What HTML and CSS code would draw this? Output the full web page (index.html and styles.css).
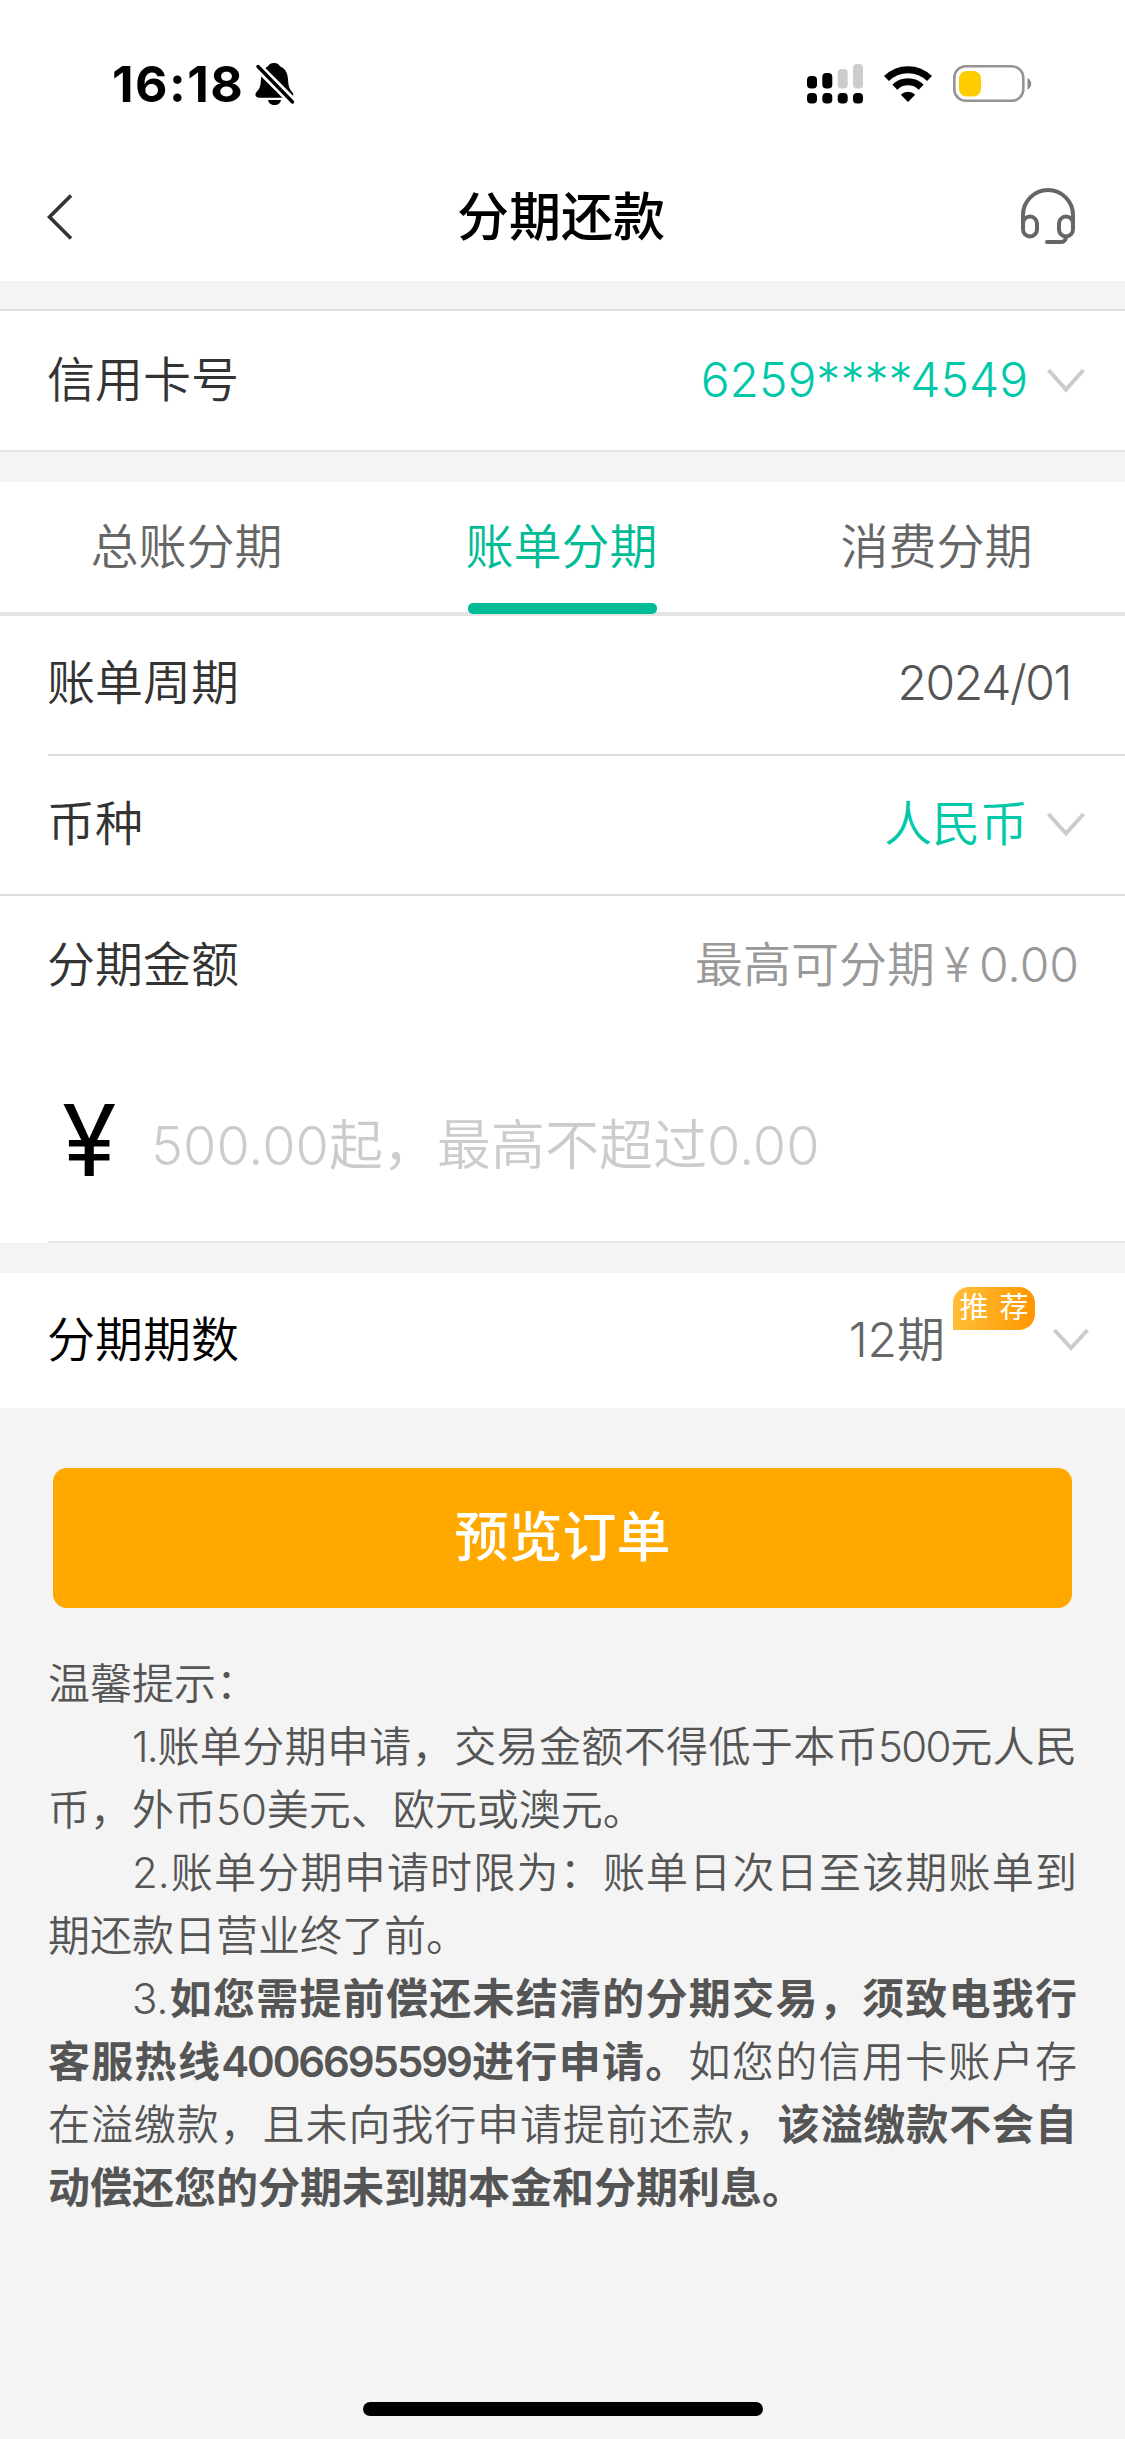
FILE: index.html
```html
<!DOCTYPE html>
<html lang="zh-CN">
<head>
<meta charset="utf-8">
<title>分期还款</title>
<link rel="stylesheet" href="styles.css">
</head>
<body>
<div class="status">
  <span class="time">16:18</span>
  <svg class="bell" width="42" height="44" viewBox="0 0 42 44">
    <path d="M20 1c3.500 0 5.300 1.800 6 3.300 5 2.200 7.600 6.500 8 12.700.4 7 1 9.500 4.500 13.500 1.500 1.800 1 5.300-2 5.300H5c-3.500 0-4.500-3.500-2.500-5.700C6 26.500 6.500 24 7 17 7.400 10.800 9.500 6.500 14 4.300 14.800 2.600 16.500 1 20 1z"/>
    <path d="M14 38h13c-.5 3-3 5-6.500 5S14.500 41 14 38z"/>
    <path d="M2 3 40 41" stroke="#fff" stroke-width="9"/>
    <path d="M4 4.500 38.500 40" stroke="#000" stroke-width="3.400" stroke-linecap="round"/>
  </svg>
  <svg class="signal" width="56" height="40" viewBox="0 0 56 40">
    <rect x="0" y="12" width="10" height="12.500" rx="4"/><rect x="15.300" y="9" width="10" height="15.500" rx="4"/>
    <rect x="30.700" y="5" width="10" height="19.500" rx="4" fill="#ccc"/><rect x="46" y="0" width="10" height="24.500" rx="4" fill="#ccc"/>
    <rect x="0" y="29" width="10" height="10.500" rx="4"/><rect x="15.300" y="29" width="10" height="10.500" rx="4"/>
    <rect x="30.700" y="29" width="10" height="10.500" rx="4"/><rect x="46" y="29" width="10" height="10.500" rx="4"/>
  </svg>
  <svg class="wifi" width="48" height="36" viewBox="0 0 48 36">
    <path d="M2.500 12.500a30.500 30.500 0 0 1 43 0M10.800 21.300a18.700 18.700 0 0 1 26.400 0" fill="none" stroke="#000" stroke-width="7"/>
    <path d="M24 36 16.800 28.700a10.300 10.300 0 0 1 14.400 0z"/>
  </svg>
  <svg class="battery" width="80" height="38" viewBox="0 0 80 38">
    <rect x="1.300" y="1.300" width="69" height="34.500" rx="11.500" fill="none" stroke="#949494" stroke-width="2.600"/>
    <rect x="6" y="6" width="22" height="25.500" rx="7.500" fill="#fc0"/>
    <path d="M74.500 13v11.500c5-2.500 5-9 0-11.500z" fill="#8a8a8a"/>
  </svg>
</div>
<header class="nav">
  <svg class="back" width="26" height="46" viewBox="0 0 26 46"><path d="M24 1.500 2.500 23 24 44.500" fill="none" stroke="#333" stroke-width="3.600"/></svg>
  <h1>分期还款</h1>
  <svg class="headset" width="54" height="56" viewBox="0 0 54 56" fill="none" stroke="#666" stroke-width="4" stroke-linecap="round">
    <path d="M2 39V27a25 25 0 0 1 50 0v12"/>
    <rect x="2" y="28.500" width="14" height="20" rx="7"/><rect x="38" y="28.500" width="14" height="20" rx="7"/>
    <path d="M45 49c0 3-2.500 5-5.500 5H26"/>
  </svg>
</header>
<section class="row card">
  <span class="label">信用卡号</span><span class="value green">6259****4549</span>
  <svg class="arrow" width="38" height="26" viewBox="0 0 38 26"><path d="M1.500 2 19 21.500 36.500 2"/></svg>
</section>
<nav class="tabs">
  <span class="tab">总账分期</span><span class="tab active">账单分期</span><span class="tab">消费分期</span>
</nav>
<section class="row period">
  <span class="label">账单周期</span><span class="value date">2024/01</span>
</section>
<section class="row currency">
  <span class="label">币种</span><span class="value green">人民币</span>
  <svg class="arrow" width="38" height="26" viewBox="0 0 38 26"><path d="M1.500 2 19 21.500 36.500 2"/></svg>
</section>
<section class="amount">
  <div class="row limit"><span class="label">分期金额</span><span class="value">最高可分期<span class="yen">¥</span>0.00</span></div>
  <div class="field"><span class="sign">¥</span><span class="hint">500.00起，最高不超过0.00</span></div>
</section>
<section class="row terms">
  <span class="label">分期期数</span><span class="value">12期</span><span class="badge">推 荐</span>
  <svg class="arrow" width="36" height="24" viewBox="0 0 36 24"><path d="M1.500 2 18 20 34.500 2"/></svg>
</section>
<button class="submit">预览订单</button>
<section class="tips">
  <p class="head">温馨提示：</p>
  <p><span class="num">1.</span>账单分期申请，交易金额不得低于本币<span class="num">500</span>元人民币，外币50美元、欧元或澳元。</p>
  <p>2.账单分期申请时限为：账单日次日至该期账单到期还款日营业终了前。</p>
  <p>3.<b>如您需提前偿还未结清的分期交易，须致电我行客服热线<span class="num">4006695599</span>进行申请。</b>如您的信用卡账户存在溢缴款，且未向我行申请提前还款，<b>该溢缴款不会自动偿还您的分期未到期本金和分期利息。</b></p>
</section>
<div class="home"></div>
</body>
</html>
```
FILE: styles.css
```css
* { box-sizing: border-box; }
body {
  margin: 0;
  height: 2439px;
  overflow: hidden;
  display: flex;
  flex-direction: column;
  background: #f4f4f4;
  color: #333;
  font-family: Inter, "Noto Sans CJK SC", sans-serif;
  font-size: 48px;
  font-weight: 350;
}
svg { display: block; flex: none; }
.status {
  height: 168px;
  padding: 0 93px 0 112px;
  display: flex;
  align-items: center;
  background: #fff;
}
.time { font-size: 50px; font-weight: 700; color: #000; letter-spacing: 1.5px; }
.bell { margin-left: 10px; }
.signal { margin-left: auto; }
.wifi { margin-left: 21px; }
.battery { margin-left: 21px; margin-right: -1px; }
.nav {
  height: 113px;
  padding: 0 50px 14px 47px;
  display: grid;
  grid-template-columns: 1fr auto 1fr;
  align-items: center;
  background: #fff;
}
.nav h1 { margin: 0; font-size: 52px; font-weight: 500; color: #000; line-height: 76px; }
.back { margin-top: -1px; }
.headset { justify-self: end; margin-top: -3px; }
.row {
  display: flex;
  align-items: center;
  padding-left: 47px;
  background: #fff;
  line-height: 72px;
}
.value { margin-left: auto; color: #555; }
.value.green { color: #00c8a8; }
.arrow { fill: none; stroke: #ccc; stroke-width: 4; }
.card {
  height: 143px;
  margin-top: 28px;
  margin-bottom: 1px;
  padding-right: 40px;
  padding-bottom: 1px;
  border-top: 2px solid #ddd;
  border-bottom: 2px solid #e2e2e2;
}
.card .arrow, .currency .arrow { margin-left: 19px; margin-top: 2px; }
.tabs {
  height: 134px;
  margin-top: 29px;
  display: flex;
  background: #fff;
  border-bottom: 4px solid #e4e4e4;
  color: #666;
}
.tab {
  flex: 1;
  display: flex;
  flex-direction: column;
  align-items: center;
  line-height: 130px;
  text-indent: -2px;
}
.tab.active { color: #00bc96; }
.tab.active::after {
  content: "";
  width: 189px;
  height: 11px;
  margin-top: -9px;
  flex: none;
  border-radius: 5px;
  background: #00bc96;
}
.period { height: 138px; padding-right: 54px; padding-bottom: 4px; }
.date { letter-spacing: -1.4px; }
.currency {
  height: 142px;
  padding-right: 40px;
  border-bottom: 2px solid #ddd;
  background: linear-gradient(#ddd, #ddd) 48px 0 / 100% 2px no-repeat #fff;
}
.amount {
  height: 347px;
  background: linear-gradient(#e6e6e6, #e6e6e6) 48px 100% / 100% 2px no-repeat #fff;
}
.limit { height: 140px; padding-right: 46px; padding-bottom: 2px; }
.limit .value { color: #999; }
.yen { margin: 0 9px; }
.field { height: 205px; padding: 0 62px; display: flex; align-items: center; }
.sign { width: 89px; padding-top: 2px; font-size: 99px; font-weight: 400; color: #000; line-height: 120px; }
.hint { margin-top: 14px; font-size: 54px; color: #ccc; line-height: 80px; }
.terms { height: 135px; margin-top: 30px; padding-right: 36px; padding-bottom: 2px; }
.terms .label { color: #000; }
.terms .value { color: #666; }
.badge {
  width: 82px;
  height: 43px;
  margin: 0 18px 62px 8px;
  border-radius: 16px 16px 16px 0;
  background: linear-gradient(90deg, #ffbe38, #ff9700);
  color: #fff;
  font-size: 29px;
  line-height: 42px;
  text-align: center;
  font-weight: 400;
  word-spacing: 3px;
}
.submit {
  width: 1019px;
  height: 140px;
  margin: 60px auto 0 53px;
  padding: 0;
  border: 0;
  border-radius: 14px;
  background: #ffa800;
  color: #fff;
  font: 500 54px/140px Inter, "Noto Sans CJK SC", sans-serif;
}
.tips {
  margin: 44px 48px 0;
  font-size: 42px;
  line-height: 63px;
  color: #555;
  text-align: justify;
}
.tips p { margin: 0; text-indent: 2em; }
.tips .head { text-indent: 0; }
.tips .num { letter-spacing: -0.04em; }
.tips b { font-weight: 700; }
.tips b .num { font-weight: 600; letter-spacing: -0.05em; }
.home {
  width: 400px;
  height: 14px;
  margin: auto auto 23px;
  border-radius: 7px;
  background: #000;
}
```
